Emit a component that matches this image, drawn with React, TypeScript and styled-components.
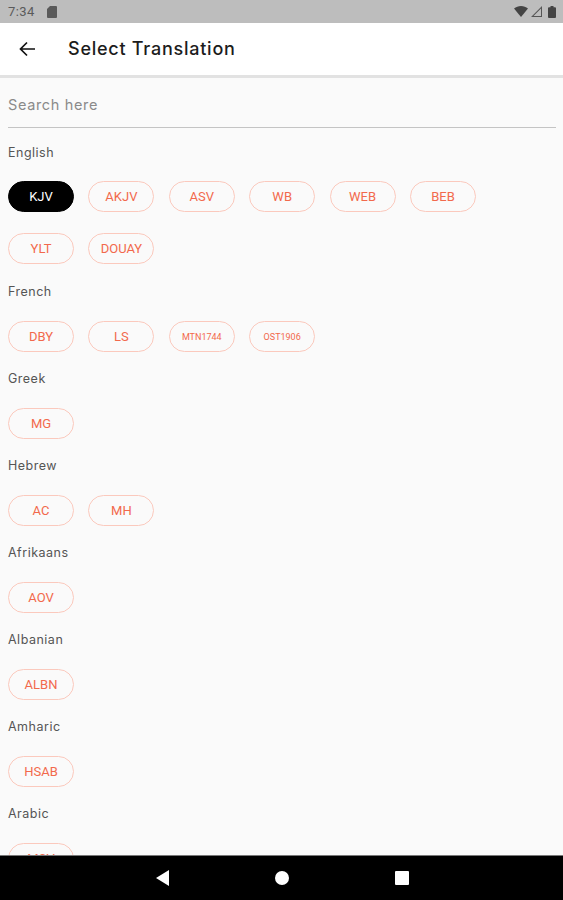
import React from "react";
import styled, { createGlobalStyle } from "styled-components";

const Global = createGlobalStyle`
  html, body { margin: 0; padding: 0; height: 100%; }
  #root { height: 100%; }
  * { box-sizing: border-box; }
`;

const Screen = styled.div`
  width: 563px; height: 900px; display: flex; flex-direction: column;
  background: #fafafa; overflow: hidden; font-family: Inter, "Liberation Sans", sans-serif;
`;
const StatusBar = styled.div`
  height: 23px; flex: none; background: #bdbdbd; display: flex; align-items: center;
  padding: 0 7px 0 8px; color: #5a5a5a;
`;
const Time = styled.span`
  font: 400 13px Roboto, sans-serif; letter-spacing: .4px; margin-right: 12px;
`;
const StatusRight = styled.div`
  margin-left: auto; display: flex; align-items: center; gap: 3px;
`;
const AppBar = styled.header`
  height: 55px; flex: none; background: #fff; border-bottom: 3px solid #e2e2e2;
  display: flex; align-items: center; padding: 0 0 1px 18px;
`;
const BackIcon = styled.svg`
  width: 18px; height: 18px; margin-right: 32px; flex: none;
`;
const Title = styled.h1`
  margin: 0; font: 500 18px Inter, sans-serif; letter-spacing: .75px; color: #1c1c1c;
`;
const Content = styled.main`
  flex: 1; min-height: 0; overflow: hidden; padding: 0 7px 0 8px;
`;
const Search = styled.div`
  height: 50px; border-bottom: 1.5px solid #c4c4c4; display: flex; align-items: center;
  font-size: 14.5px; color: #8a8a8a; padding-top: 4px; letter-spacing: .65px;
`;
const Section = styled.section<{ $first?: boolean }>`
  margin-bottom: ${(p) => (p.$first ? "18px" : "17px")};
`;
const Label = styled.div<{ $first?: boolean }>`
  height: 20px; line-height: 20px; font-size: 12.5px; color: #555; letter-spacing: .5px;
  margin-top: ${(p) => (p.$first ? "15px" : "0")}; margin-bottom: ${(p) => (p.$first ? "18px" : "19px")};
`;
const Chips = styled.div`
  display: flex; flex-wrap: wrap; column-gap: 14.4px; row-gap: 21px; max-width: 540px;
`;
const Chip = styled.div<{ $active?: boolean; $small?: boolean }>`
  width: 66px; height: 31px; border-radius: 16px; display: flex; align-items: center; justify-content: center;
  font-family: Roboto, sans-serif; font-size: ${(p) => (p.$small ? "9px" : "13px")};
  color: ${(p) => (p.$active ? "#fff" : "#f2694c")};
  background: ${(p) => (p.$active ? "#000" : "transparent")};
  border: 1.5px solid ${(p) => (p.$active ? "#000" : "#fbc9bd")};
`;
const NavBar = styled.nav`
  height: 45px; flex: none; background: #000; border-top: 1px solid #777;
  display: flex; align-items: center; justify-content: center; gap: 103.5px; padding: 0 0 0 1px;
`;
const NavIcon = styled.svg`
  width: 16px; height: 16px; fill: #fff; flex: none;
`;

const groups: { name: string; items: string[] }[] = [
  { name: "English", items: ["KJV", "AKJV", "ASV", "WB", "WEB", "BEB", "YLT", "DOUAY"] },
  { name: "French", items: ["DBY", "LS", "MTN1744", "OST1906"] },
  { name: "Greek", items: ["MG"] },
  { name: "Hebrew", items: ["AC", "MH"] },
  { name: "Afrikaans", items: ["AOV"] },
  { name: "Albanian", items: ["ALBN"] },
  { name: "Amharic", items: ["HSAB"] },
  { name: "Arabic", items: ["MSV"] },
];

export default function App() {
  return (
    <Screen>
      <Global />
      <StatusBar>
        <Time>7:34</Time>
        <svg width="10" height="12" viewBox="0 0 10 12" fill="#5a5a5a">
          <path d="M3 0h6a1 1 0 0 1 1 1v10a1 1 0 0 1-1 1H1a1 1 0 0 1-1-1V3z" />
        </svg>
        <StatusRight>
          <svg width="14" height="11" viewBox="0 0 14 11" fill="#444"><path d="M0 2.500C2 .9 4.400 0 7 0s5 .9 7 2.500L7 11z" /></svg>
          <svg width="11" height="11" viewBox="0 0 11 11" fill="#555"><path d="M11 0v11H0zM10 2.500 2.500 10H10z" /></svg>
          <svg width="8" height="12" viewBox="0 0 8 12" fill="#444" style={{ marginLeft: 3 }}><path d="M2.500 0h3v1.200H7a1 1 0 0 1 1 1V11a1 1 0 0 1-1 1H1a1 1 0 0 1-1-1V2.200a1 1 0 0 1 1-1h1.500z" /></svg>
        </StatusRight>
      </StatusBar>
      <AppBar>
        <BackIcon viewBox="0 0 18 18" fill="none" stroke="#111" strokeWidth="1.700">
          <path d="M17 9H2.500M9 2.500 2.500 9 9 15.500" />
        </BackIcon>
        <Title>Select Translation</Title>
      </AppBar>
      <Content>
        <Search>Search here</Search>
        {groups.map((g, i) => (
          <Section key={g.name} $first={i === 0}>
            <Label $first={i === 0}>{g.name}</Label>
            <Chips>
              {g.items.map((c) => (
                <Chip key={c} $active={c === "KJV"} $small={c.length > 6}>{c}</Chip>
              ))}
            </Chips>
          </Section>
        ))}
      </Content>
      <NavBar>
        <NavIcon viewBox="0 0 16 16"><path d="M14 0v16L1 8z" /></NavIcon>
        <NavIcon viewBox="0 0 16 16"><circle cx="8" cy="8" r="7" /></NavIcon>
        <NavIcon viewBox="0 0 16 16"><rect x="1" y="1" width="14" height="14" rx="1" /></NavIcon>
      </NavBar>
    </Screen>
  );
}
